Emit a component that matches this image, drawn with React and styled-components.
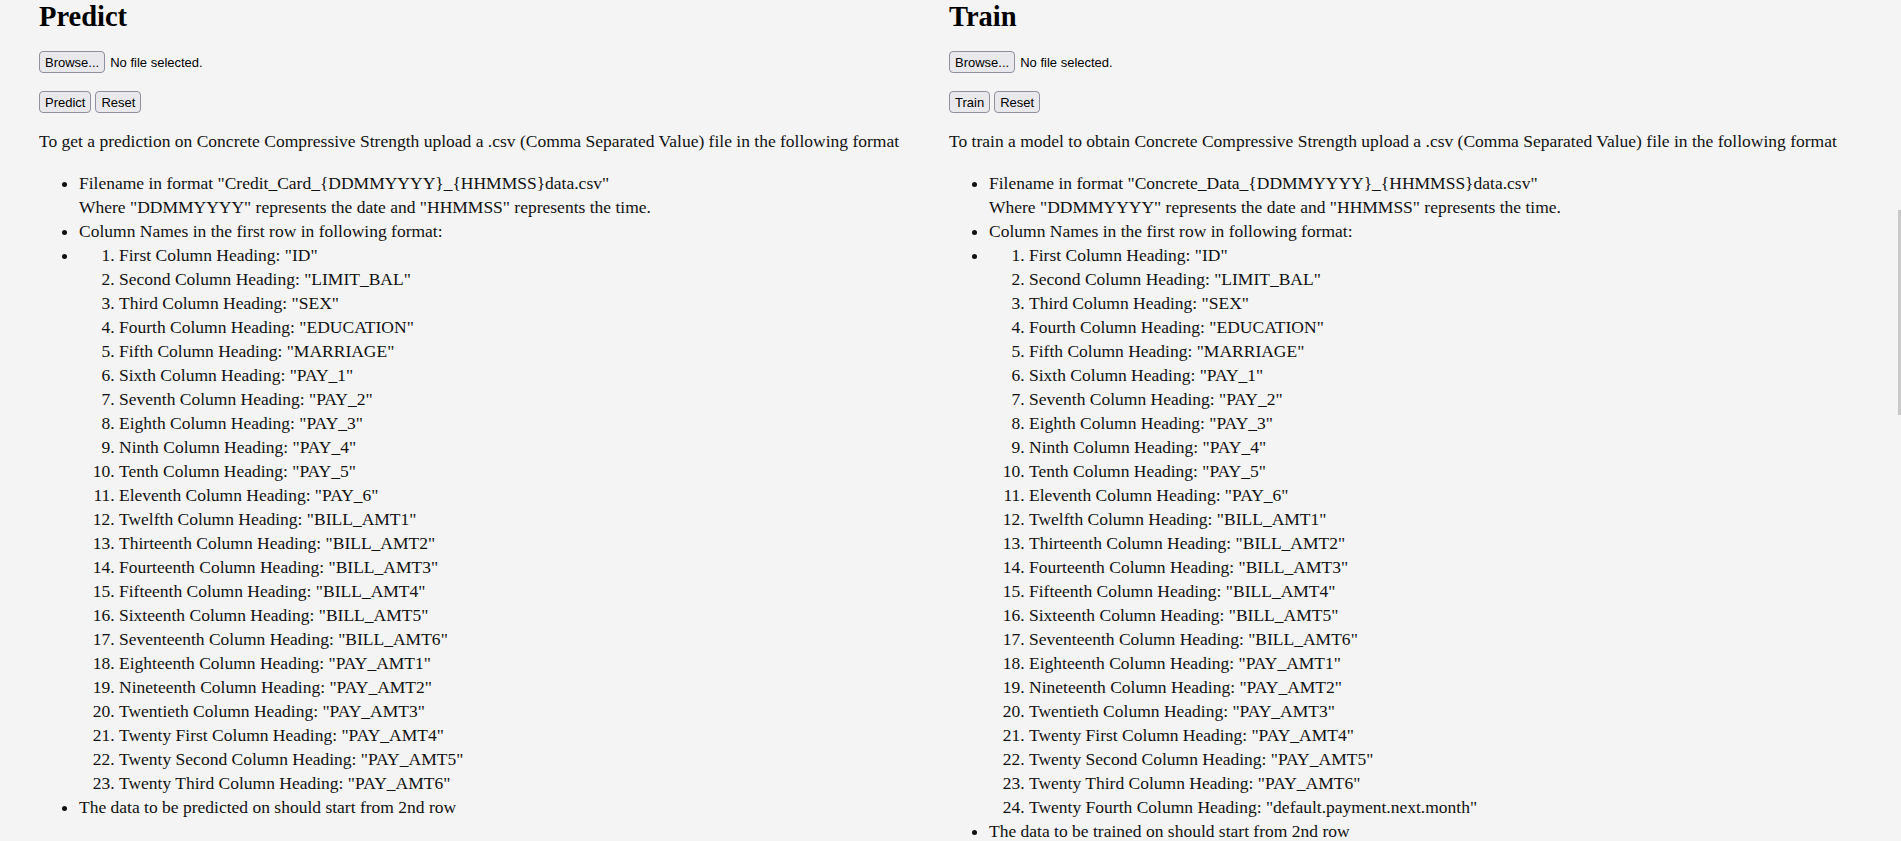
import React from "react";
import styled, { createGlobalStyle } from "styled-components";

const GlobalStyle = createGlobalStyle`
  html, body {
    margin: 0;
    padding: 0;
    background: #f4f4f4;
    overflow: hidden;
  }
  body {
    font-family: "Liberation Serif", "DejaVu Serif", serif;
    color: #111;
  }
`;

const Page = styled.div`
  display: grid;
  grid-template-columns: 910px 910px;
  padding-left: 39px;
  height: 841px;
  overflow: hidden;
`;

const Column = styled.section`
  display: flex;
  flex-direction: column;
  align-items: flex-start;
`;

const Title = styled.h2`
  margin: 0;
  height: 34px;
  line-height: 34px;
  font-size: 28.5px;
  font-weight: 700;
  color: #000;
`;

const Controls = styled.div`
  display: flex;
  align-items: center;
  gap: 4px;
  margin-top: ${(p) => p.$top}px;
  font-family: "Liberation Sans", "DejaVu Sans", sans-serif;
  font-size: 13px;
  color: #000;
`;

const NativeButton = styled.button`
  height: 22px;
  padding: 0 5px;
  border: 1px solid #8f8f9d;
  border-radius: 4px;
  background: #e9e9ed;
  font-family: "Liberation Sans", "DejaVu Sans", sans-serif;
  font-size: 13px;
  color: #000;
  cursor: pointer;
`;

const FileLabel = styled.span`
  margin-left: 1px;
`;

const Intro = styled.p`
  margin: 16px 0 0;
  font-size: 17.5px;
  line-height: 24px;
`;

const Bullets = styled.ul`
  margin: 18px 0 0;
  padding-left: 40px;
  font-size: 17.5px;
  line-height: 24px;
  list-style: disc;
`;

const Numbered = styled.ol`
  margin: 0;
  padding-left: 40px;
`;

const predictCols = [
  "ID", "LIMIT_BAL", "SEX", "EDUCATION", "MARRIAGE", "PAY_1", "PAY_2", "PAY_3",
  "PAY_4", "PAY_5", "PAY_6", "BILL_AMT1", "BILL_AMT2", "BILL_AMT3", "BILL_AMT4",
  "BILL_AMT5", "BILL_AMT6", "PAY_AMT1", "PAY_AMT2", "PAY_AMT3", "PAY_AMT4",
  "PAY_AMT5", "PAY_AMT6",
];

const ordinals = [
  "First", "Second", "Third", "Fourth", "Fifth", "Sixth", "Seventh", "Eighth",
  "Ninth", "Tenth", "Eleventh", "Twelfth", "Thirteenth", "Fourteenth",
  "Fifteenth", "Sixteenth", "Seventeenth", "Eighteenth", "Nineteenth",
  "Twentieth", "Twenty First", "Twenty Second", "Twenty Third", "Twenty Fourth",
];

const ScrollThumb = styled.div`
  position: fixed;
  right: 0;
  top: 210px;
  width: 3px;
  height: 205px;
  background: #c9c9c9;
`;

function Panel({ title, action, intro, fileName, columns, lastLine }) {
  return (
    <Column>
      <Title>{title}</Title>
      <Controls $top={17}>
        <NativeButton>Browse...</NativeButton>
        <FileLabel>No file selected.</FileLabel>
      </Controls>
      <Controls $top={18}>
        <NativeButton>{action}</NativeButton>
        <NativeButton>Reset</NativeButton>
      </Controls>
      <Intro>{intro}</Intro>
      <Bullets>
        <li>
          Filename in format "{fileName}_{"{DDMMYYYY}"}_{"{HHMMSS}"}data.csv"
          <br />
          Where "DDMMYYYY" represents the date and "HHMMSS" represents the time.
        </li>
        <li>Column Names in the first row in following format:</li>
        <li>
          <Numbered>
            {columns.map((c, i) => (
              <li key={c}>
                {ordinals[i]} Column Heading: "{c}"
              </li>
            ))}
          </Numbered>
        </li>
        <li>{lastLine}</li>
      </Bullets>
    </Column>
  );
}

export default function App() {
  return (
    <>
      <GlobalStyle />
      <Page>
        <Panel
          title="Predict"
          action="Predict"
          intro="To get a prediction on Concrete Compressive Strength upload a .csv (Comma Separated Value) file in the following format"
          fileName="Credit_Card"
          columns={predictCols}
          lastLine="The data to be predicted on should start from 2nd row"
        />
        <Panel
          title="Train"
          action="Train"
          intro="To train a model to obtain Concrete Compressive Strength upload a .csv (Comma Separated Value) file in the following format"
          fileName="Concrete_Data"
          columns={[...predictCols, "default.payment.next.month"]}
          lastLine="The data to be trained on should start from 2nd row"
        />
      </Page>
      <ScrollThumb />
    </>
  );
}
